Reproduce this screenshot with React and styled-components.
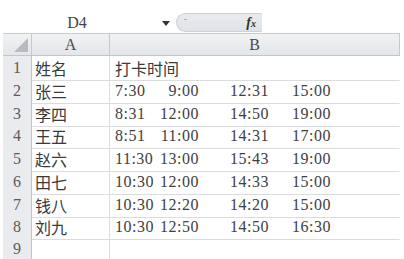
import React from 'react';
import styled, { createGlobalStyle } from 'styled-components';

const rows = [
  ['姓名', '打卡时间'],
  ['张三', ['7:30', '9:00', '12:31', '15:00']],
  ['李四', ['8:31', '12:00', '14:50', '19:00']],
  ['王五', ['8:51', '11:00', '14:31', '17:00']],
  ['赵六', ['11:30', '13:00', '15:43', '19:00']],
  ['田七', ['10:30', '12:00', '14:33', '15:00']],
  ['钱八', ['10:30', '12:20', '14:20', '15:00']],
  ['刘九', ['10:30', '12:50', '14:50', '16:30']],
  ['', ''],
];

const GlobalStyle = createGlobalStyle`
  body {
    margin: 0;
    background: #fff;
    overflow: hidden;
  }
`;

const Sheet = styled.div`
  width: 397px;
  margin-left: 3px;
  font-family: "Liberation Serif", "Noto Sans CJK SC", serif;
  color: #3a3a3a;
`;

const FormulaBar = styled.div`
  height: 19px;
  padding: 13px 0 1px;
  display: flex;
  align-items: stretch;
  border-bottom: 1px solid #c9cdd2;
`;

const NameBox = styled.div`
  width: 148px;
  text-align: center;
  font-size: 16px;
  line-height: 21px;
  color: #444;
  margin-top: -1px;
`;

const DropArrow = styled.div`
  width: 0;
  height: 0;
  margin: 8px 0 0 11px;
  border-left: 4px solid transparent;
  border-right: 4px solid transparent;
  border-top: 5px solid #333;
`;

const FormulaPill = styled.div`
  width: 86px;
  margin-left: 6px;
  display: flex;
  align-items: center;
  justify-content: space-between;
  padding: 0 5px 0 7px;
  box-sizing: border-box;
  border: 1px solid #cdd1d6;
  border-right-color: #e0e3e7;
  border-radius: 10px 0 0 10px;
  background: linear-gradient(#e9ebee, #dfe2e6);
`;

const Dash = styled.span`
  width: 3px;
  height: 1px;
  background: #aab0b7;
  margin-bottom: 6px;
`;

const Fx = styled.span`
  font-style: italic;
  font-weight: bold;
  font-size: 14px;
  color: #333;

  & > sub {
    font-size: 10px;
    vertical-align: baseline;
  }
`;

const Row = styled.div`
  display: grid;
  grid-template-columns: 29px 78px 1fr;
  height: ${(p) => p.$h};
  box-sizing: border-box;
`;

const HeadCell = styled.div`
  position: relative;
  background: linear-gradient(#f1f2f4, #e3e6ea);
  border-right: 1px solid #c6cacf;
  border-bottom: 1px solid #c2c6cb;
  text-align: center;
  font-size: 16px;
  line-height: 21px;
  color: #4a4a4a;
`;

const Corner = styled(HeadCell)`
  &::after {
    content: '';
    position: absolute;
    right: 3px;
    bottom: 3px;
    width: 0;
    height: 0;
    border-left: 14px solid transparent;
    border-bottom: 14px solid #b7bbc0;
  }
`;

const RowNum = styled.div`
  background: #e9ebee;
  border-right: 1px solid #bfc3c8;
  border-bottom: 1px solid #f7f8f9;
  display: flex;
  align-items: center;
  justify-content: center;
  font-size: 16px;
  color: #5a5a5a;
`;

const Cell = styled.div`
  border-right: 1px solid ${(p) => (p.$last ? 'transparent' : '#dadcdf')};
  border-bottom: 1px solid #dadcdf;
  display: flex;
  align-items: center;
  padding-left: ${(p) => p.$pad};
  font-size: 16px;
  white-space: nowrap;
`;

const Times = styled.div`
  display: grid;
  grid-template-columns: 45px 70px 62px 1fr;
  letter-spacing: 0.5px;
  color: #404040;
`;

const Time = styled.span`
  width: ${(p) => (p.$right ? '39px' : 'auto')};
  text-align: ${(p) => (p.$right ? 'right' : 'left')};
`;

const App = () => (
  <Sheet>
    <GlobalStyle />
    <FormulaBar>
      <NameBox>D4</NameBox>
      <DropArrow />
      <FormulaPill>
        <Dash />
        <Fx>
          f<sub>x</sub>
        </Fx>
      </FormulaPill>
    </FormulaBar>
    <Row $h="22px">
      <Corner />
      <HeadCell>A</HeadCell>
      <HeadCell>B</HeadCell>
    </Row>
    {rows.map(([name, value], i) => (
      <Row key={i} $h="22.75px">
        <RowNum>{i + 1}</RowNum>
        <Cell $pad="3px">{name}</Cell>
        <Cell $pad="5px" $last>
          {Array.isArray(value) ? (
            <Times>
              {value.map((t, j) => (
                <Time key={j} $right={j === 1}>
                  {t}
                </Time>
              ))}
            </Times>
          ) : (
            value
          )}
        </Cell>
      </Row>
    ))}
  </Sheet>
);

export default App;
